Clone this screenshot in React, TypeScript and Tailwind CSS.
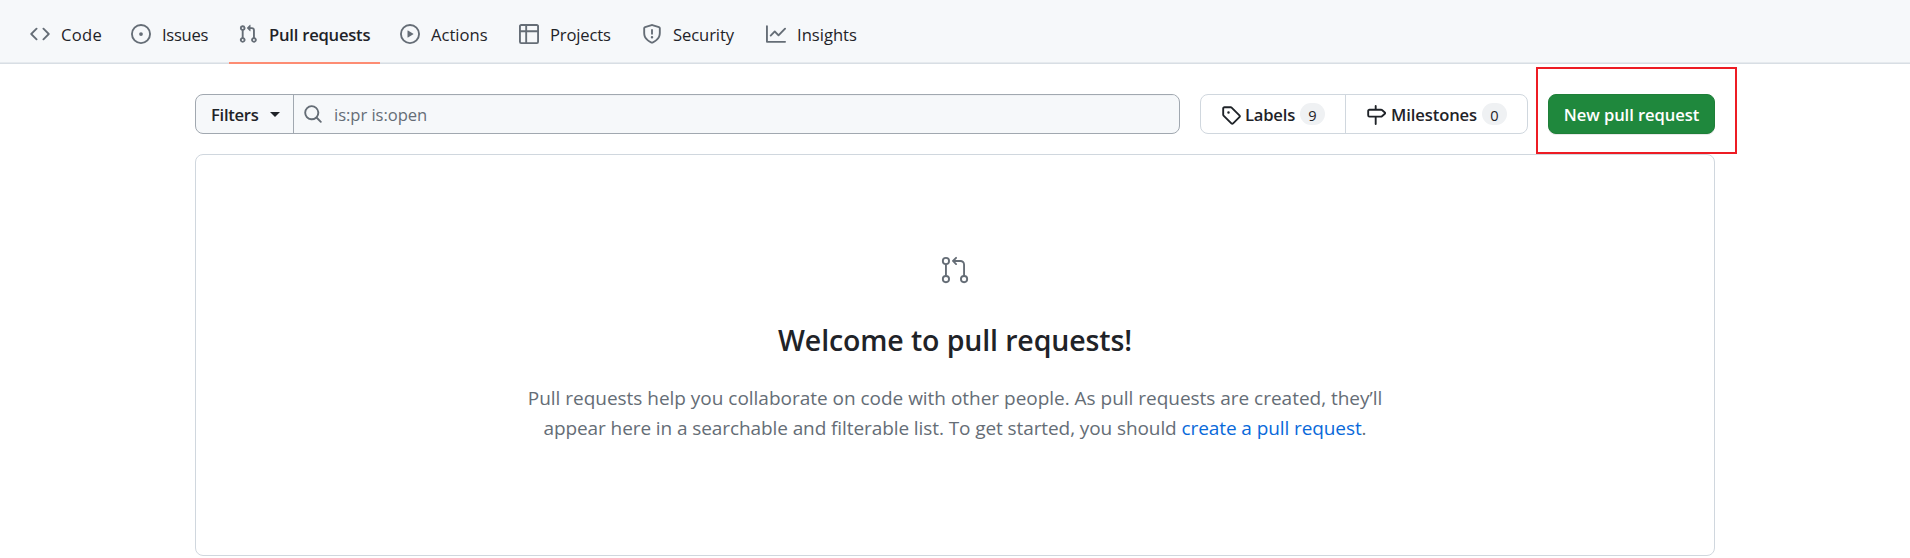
import React from "react";
import clsx from "clsx";

const paths = {
  code: "m11.28 3.22 4.25 4.25a.75.75 0 0 1 0 1.06l-4.25 4.25a.749.749 0 0 1-1.275-.326.749.749 0 0 1 .215-.734L13.94 8l-3.72-3.72a.749.749 0 0 1 .326-1.275.749.749 0 0 1 .734.215Zm-6.56 0a.751.751 0 0 1 1.042.018.751.751 0 0 1 .018 1.042L2.06 8l3.72 3.72a.749.749 0 0 1-.326 1.275.749.749 0 0 1-.734-.215L.47 8.53a.75.75 0 0 1 0-1.06Z",
  issue: "M8 9.5a1.5 1.5 0 1 0 0-3 1.5 1.5 0 0 0 0 3ZM8 0a8 8 0 1 1 0 16A8 8 0 0 1 8 0ZM1.5 8a6.5 6.5 0 1 0 13 0 6.5 6.5 0 0 0-13 0Z",
  pull: "M1.5 3.25a2.25 2.25 0 1 1 3 2.122v5.256a2.251 2.251 0 1 1-1.5 0V5.372A2.25 2.25 0 0 1 1.5 3.25Zm5.677-.177L9.573.677A.25.25 0 0 1 10 .854V2.5h1A2.5 2.5 0 0 1 13.5 5v5.628a2.251 2.251 0 1 1-1.5 0V5a1 1 0 0 0-1-1h-1v1.646a.25.25 0 0 1-.427.177L7.177 3.427a.25.25 0 0 1 0-.354ZM3.75 2.5a.75.75 0 1 0 0 1.5.75.75 0 0 0 0-1.5Zm0 9.5a.75.75 0 1 0 0 1.5.75.75 0 0 0 0-1.5Zm8.25.75a.75.75 0 1 0 1.5 0 .75.75 0 0 0-1.5 0Z",
  play: "M8 0a8 8 0 1 1 0 16A8 8 0 0 1 8 0ZM1.5 8a6.5 6.5 0 1 0 13 0 6.5 6.5 0 0 0-13 0Zm4.879-2.773 4.264 2.559a.25.25 0 0 1 0 .428l-4.264 2.559A.25.25 0 0 1 6 10.559V5.442a.25.25 0 0 1 .379-.215Z",
  table: "M0 1.75C0 .784.784 0 1.75 0h12.5C15.216 0 16 .784 16 1.75v12.5A1.75 1.75 0 0 1 14.25 16H1.75A1.75 1.75 0 0 1 0 14.25ZM6.5 6.5v8h7.75a.25.25 0 0 0 .25-.25V6.5Zm8-1.5V1.75a.25.25 0 0 0-.25-.25H6.5V5Zm-13 1.5v7.75c0 .138.112.25.25.25H5v-8ZM5 5V1.5H1.75a.25.25 0 0 0-.25.25V5Z",
  shield: "M7.467.133a1.748 1.748 0 0 1 1.066 0l5.25 1.68A1.75 1.75 0 0 1 15 3.48V7c0 1.566-.32 3.182-1.303 4.682-.983 1.498-2.585 2.813-5.032 3.855a1.697 1.697 0 0 1-1.33 0c-2.447-1.042-4.049-2.357-5.032-3.855C1.32 10.182 1 8.566 1 7V3.48a1.75 1.75 0 0 1 1.217-1.667Zm.61 1.429a.25.25 0 0 0-.153 0l-5.25 1.68a.25.25 0 0 0-.174.238V7c0 1.358.275 2.666 1.057 3.86.784 1.194 2.121 2.34 4.366 3.297a.196.196 0 0 0 .154 0c2.245-.956 3.582-2.104 4.366-3.298C13.225 9.666 13.5 8.36 13.5 7V3.48a.251.251 0 0 0-.174-.237l-5.25-1.68ZM8.75 4.75v3a.75.75 0 0 1-1.5 0v-3a.75.75 0 0 1 1.5 0ZM9 10.5a1 1 0 1 1-2 0 1 1 0 0 1 2 0Z",
  graph: "M1.5 1.75V13.5h13.75a.75.75 0 0 1 0 1.5H.75a.75.75 0 0 1-.75-.75V1.75a.75.75 0 0 1 1.5 0Zm14.28 2.53-5.25 5.25a.75.75 0 0 1-1.06 0L7 7.06 4.28 9.78a.751.751 0 0 1-1.042-.018.751.751 0 0 1-.018-1.042l3.25-3.25a.75.75 0 0 1 1.06 0L10 7.94l4.72-4.72a.751.751 0 0 1 1.042.018.751.751 0 0 1 .018 1.042Z",
  search: "M10.68 11.74a6 6 0 0 1-7.922-8.982 6 6 0 0 1 8.982 7.922l3.04 3.04a.749.749 0 0 1-.326 1.275.749.749 0 0 1-.734-.215ZM11.5 7a4.499 4.499 0 1 0-8.997 0A4.499 4.499 0 0 0 11.5 7Z",
  tag: "M1 7.775V2.75C1 1.784 1.784 1 2.75 1h5.025c.464 0 .91.184 1.238.513l6.25 6.25a1.75 1.75 0 0 1 0 2.474l-5.026 5.026a1.75 1.75 0 0 1-2.474 0l-6.25-6.25A1.752 1.752 0 0 1 1 7.775Zm1.5 0c0 .066.026.13.073.177l6.25 6.25a.25.25 0 0 0 .354 0l5.025-5.025a.25.25 0 0 0 0-.354l-6.25-6.25a.25.25 0 0 0-.177-.073H2.75a.25.25 0 0 0-.25.25ZM6 5a1 1 0 1 1 0 2 1 1 0 0 1 0-2Z",
  milestone: "M7.75 0a.75.75 0 0 1 .75.75V3h3.634c.414 0 .814.147 1.13.414l2.07 1.75a1.75 1.75 0 0 1 0 2.672l-2.07 1.75a1.75 1.75 0 0 1-1.13.414H8.5v5.25a.75.75 0 0 1-1.5 0V10H2.75A1.75 1.75 0 0 1 1 8.25v-3.5C1 3.784 1.784 3 2.75 3H7V.75A.75.75 0 0 1 7.75 0Zm4.384 8.5a.25.25 0 0 0 .161-.06l2.07-1.75a.248.248 0 0 0 0-.38l-2.07-1.75a.25.25 0 0 0-.161-.06H2.75a.25.25 0 0 0-.25.25v3.5c0 .138.112.25.25.25h9.384Z",
};

type IconName = keyof typeof paths;

function Icon({ name, className }: { name: IconName; className?: string }) {
  return (
    <svg viewBox="0 0 16 16" className={clsx("size-5 shrink-0", className)} fill="currentColor" aria-hidden="true">
      <path d={paths[name]} />
    </svg>
  );
}

const tabs: { icon: IconName; label: string; width: string; tracking: string; active?: boolean }[] = [
  { icon: "code", label: "Code", width: "w-[91px]", tracking: "tracking-[0.3px]" },
  { icon: "issue", label: "Issues", width: "w-[97px]", tracking: "tracking-[-0.3px]" },
  { icon: "pull", label: "Pull requests", width: "w-[152px]", tracking: "tracking-[-0.22px]", active: true },
  { icon: "play", label: "Actions", width: "w-[109px]", tracking: "tracking-normal" },
  { icon: "table", label: "Projects", width: "w-[113px]", tracking: "tracking-[-0.15px]" },
  { icon: "shield", label: "Security", width: "w-[114px]", tracking: "tracking-[-0.1px]" },
  { icon: "graph", label: "Insights", width: "w-[109px]", tracking: "tracking-normal" },
];

function Counter({ children }: { children: React.ReactNode }) {
  return (
    <span className="flex h-[22px] w-[25px] items-center justify-center rounded-full bg-[#eff1f3] pt-0.5 text-[14.6px] leading-none font-medium">
      {children}
    </span>
  );
}

export default function App() {
  return (
    <div className="relative h-[558px] w-full overflow-hidden bg-white font-['Open_Sans','Noto_Sans',sans-serif] text-[16.6px] leading-6 text-[#1f2328]">
      <nav className="flex h-16 gap-2.5 border-b border-[#d8dee4] bg-[#f6f8fa] pl-5 shadow-[inset_0_-1px_0_#e6eaee]">
        {tabs.map((tab) => (
          <a key={tab.label} className={clsx("relative flex h-[63px] shrink-0 items-center gap-[11px] px-2.5 pt-[5px]", tab.width)}>
            <Icon name={tab.icon} className="text-[#656d76]" />
            <span className={clsx("pt-0.5 whitespace-nowrap", tab.tracking, tab.active && "font-semibold")}>{tab.label}</span>
            {tab.active && <span className="absolute -bottom-px left-px h-0.5 w-[151px] bg-[#fd8c73]" />}
          </a>
        ))}
      </nav>

      <main className="mx-[195px] pt-[30px]">
        <div className="flex h-10">
          <div className="flex w-[985px] overflow-hidden rounded-[8px] border border-[#a1a8b0] bg-[#f6f8fa]">
            <button className="flex w-[98px] items-center border-r border-[#a1a8b0] pl-[15px] font-semibold tracking-[-0.27px]">
              <span className="pt-0.5">Filters</span>
              <span className="ml-[11px] border-x-5 border-t-5 border-x-transparent border-t-[#1f2328]" />
            </button>
            <div className="flex flex-1 items-center pl-[9px] text-[#656d76] shadow-[inset_0_1px_0_#eff1f4]">
              <Icon name="search" />
              <span className="ml-[11px] pt-0.5 tracking-[-0.05px]">is:pr is:open</span>
            </div>
          </div>

          <div className="ml-5 flex w-[328px] rounded-[8px] border border-[#d0d7de] font-semibold">
            <a className="flex w-[145px] items-center border-r border-[#d0d7de] pl-5">
              <Icon name="tag" className="mt-0.5" />
              <span className="ml-1 w-[55px] pt-0.5 tracking-[-0.2px]">Labels</span>
              <Counter>9</Counter>
            </a>
            <a className="flex items-center pl-5">
              <Icon name="milestone" className="mt-0.5" />
              <span className="ml-[5px] w-[91px] pt-0.5 tracking-[-0.1px]">Milestones</span>
              <Counter>0</Counter>
            </a>
          </div>

          <button className="ml-5 w-[167px] rounded-[8px] border border-[#1f7f39] bg-[#1f883d] pt-0.5 font-semibold tracking-[-0.08px] whitespace-nowrap text-white shadow-[0_1px_0_rgba(31,35,40,0.1)]">
            New pull request
          </button>
        </div>

        <section className="mt-5 flex h-[402px] flex-col items-center rounded-[8px] border border-[#d0d7de] pt-[100px]">
          <svg viewBox="0 0 24 24" className="size-[30px] text-[#656d76]" fill="currentColor" aria-hidden="true">
            <path d="M16 19.25a3.25 3.25 0 1 1 6.5 0 3.25 3.25 0 0 1-6.5 0Zm-14.5 0a3.25 3.25 0 1 1 6.5 0 3.25 3.25 0 0 1-6.5 0Zm0-14.5a3.25 3.25 0 1 1 6.5 0 3.25 3.25 0 0 1-6.5 0ZM4.75 3a1.75 1.75 0 1 0 .001 3.501A1.75 1.75 0 0 0 4.75 3Zm0 14.5a1.75 1.75 0 1 0 .001 3.501A1.75 1.75 0 0 0 4.75 17.5Zm14.5 0a1.75 1.75 0 1 0 .001 3.501 1.75 1.75 0 0 0-.001-3.501Z" />
            <path d="M13.405 1.72a.75.75 0 0 1 0 1.06L12.185 4h4.065A3.75 3.75 0 0 1 20 7.75v8.75a.75.75 0 0 1-1.5 0V7.75a2.25 2.25 0 0 0-2.25-2.25h-4.064l1.22 1.22a.75.75 0 0 1-1.061 1.06l-2.5-2.5a.75.75 0 0 1 0-1.06l2.5-2.5a.75.75 0 0 1 1.06 0ZM4.75 7.25A.75.75 0 0 1 5.5 8v8A.75.75 0 0 1 4 16V8a.75.75 0 0 1 .75-.75Z" />
          </svg>
          <h2 className="mt-[33px] text-[28.5px] leading-[45px] font-semibold tracking-[-0.12px] whitespace-nowrap">Welcome to pull requests!</h2>
          <p className="mt-5 text-center text-[19px] leading-[30px] whitespace-nowrap text-[#656d76]">
            <span className="block tracking-[-0.02px]">
              Pull requests help you collaborate on code with other people. As pull requests are created, they’ll
            </span>
            <span className="block tracking-[-0.09px]">
              appear here in a searchable and filterable list. To get started, you should{" "}
              <a className="text-[#0969da]">create a pull request</a>.
            </span>
          </p>
        </section>
      </main>

      <div className="pointer-events-none absolute top-[67px] left-[1536px] h-[87px] w-[201px] border-2 border-[#ed1c24]" />
    </div>
  );
}
